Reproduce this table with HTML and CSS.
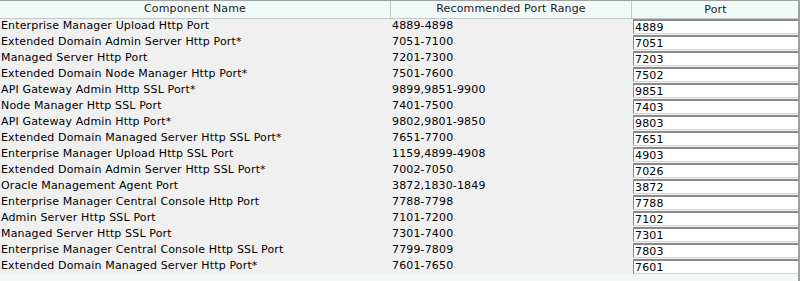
FILE: index.html
```html
<!DOCTYPE html>
<html>
<head>
<meta charset="utf-8">
<link rel="stylesheet" href="styles.css">
</head>
<body>
<div class="table">
  <div class="head">
    <div class="hc c1">Component Name</div>
    <div class="hc c2">Recommended Port Range</div>
    <div class="hc c3">Port</div>
  </div>
  <div class="rows">
    <div class="row"><div class="c1 cell">Enterprise Manager Upload Http Port</div><div class="c2 cell">4889-4898</div><div class="c3"><div class="inp">4889</div></div></div>
    <div class="row"><div class="c1 cell">Extended Domain Admin Server Http Port*</div><div class="c2 cell">7051-7100</div><div class="c3"><div class="inp">7051</div></div></div>
    <div class="row"><div class="c1 cell">Managed Server Http Port</div><div class="c2 cell">7201-7300</div><div class="c3"><div class="inp">7203</div></div></div>
    <div class="row"><div class="c1 cell">Extended Domain Node Manager Http Port*</div><div class="c2 cell">7501-7600</div><div class="c3"><div class="inp">7502</div></div></div>
    <div class="row"><div class="c1 cell">API Gateway Admin Http SSL Port*</div><div class="c2 cell">9899,9851-9900</div><div class="c3"><div class="inp">9851</div></div></div>
    <div class="row"><div class="c1 cell">Node Manager Http SSL Port</div><div class="c2 cell">7401-7500</div><div class="c3"><div class="inp">7403</div></div></div>
    <div class="row"><div class="c1 cell">API Gateway Admin Http Port*</div><div class="c2 cell">9802,9801-9850</div><div class="c3"><div class="inp">9803</div></div></div>
    <div class="row"><div class="c1 cell">Extended Domain Managed Server Http SSL Port*</div><div class="c2 cell">7651-7700</div><div class="c3"><div class="inp">7651</div></div></div>
    <div class="row"><div class="c1 cell">Enterprise Manager Upload Http SSL Port</div><div class="c2 cell">1159,4899-4908</div><div class="c3"><div class="inp">4903</div></div></div>
    <div class="row"><div class="c1 cell">Extended Domain Admin Server Http SSL Port*</div><div class="c2 cell">7002-7050</div><div class="c3"><div class="inp">7026</div></div></div>
    <div class="row"><div class="c1 cell">Oracle Management Agent Port</div><div class="c2 cell">3872,1830-1849</div><div class="c3"><div class="inp">3872</div></div></div>
    <div class="row"><div class="c1 cell">Enterprise Manager Central Console Http Port</div><div class="c2 cell">7788-7798</div><div class="c3"><div class="inp">7788</div></div></div>
    <div class="row"><div class="c1 cell">Admin Server Http SSL Port</div><div class="c2 cell">7101-7200</div><div class="c3"><div class="inp">7102</div></div></div>
    <div class="row"><div class="c1 cell">Managed Server Http SSL Port</div><div class="c2 cell">7301-7400</div><div class="c3"><div class="inp">7301</div></div></div>
    <div class="row"><div class="c1 cell">Enterprise Manager Central Console Http SSL Port</div><div class="c2 cell">7799-7809</div><div class="c3"><div class="inp">7803</div></div></div>
    <div class="row"><div class="c1 cell">Extended Domain Managed Server Http Port*</div><div class="c2 cell">7601-7650</div><div class="c3"><div class="inp">7601</div></div></div>
  </div>
</div>
</body>
</html>
```
FILE: styles.css
```css
html, body {
  margin: 0;
  padding: 0;
  background: #f4f7f7;
}
body {
  font-family: "DejaVu Sans", sans-serif;
  font-size: 11px;
  letter-spacing: 0.15px;
  color: #000;
  width: 800px;
  height: 281px;
  overflow: hidden;
}
.table {
  width: 800px;
  border-right: 2px solid #a0a0a0;
  box-sizing: border-box;
  height: 281px;
}
.head {
  display: grid;
  grid-template-columns: 391px 241px 1fr;
  height: 18px;
  background: #f0f8f8;
  border-top: 1px solid #a0a0a0;
  box-sizing: border-box;
}
.hc {
  text-align: center;
  line-height: 16px;
  border-right: 1px solid #c4c8c8;
  border-bottom: 1px solid #c4c8c8;
  color: #222;
}
.hc.c3 { border-right: none; }
.row {
  display: grid;
  grid-template-columns: 391px 241px 1fr;
  height: 16px;
  background: #f0f0f0;
}
.cell {
  line-height: 16px;
  white-space: nowrap;
  overflow: hidden;
}
.c1.cell { padding-left: 1px; }
.c2.cell { padding-left: 1px; }
.c3 {
  padding: 1px 0 0 1px;
}
.inp {
  height: 15px;
  box-sizing: border-box;
  background: #fff;
  border-top: 2px solid #8a8a8a;
  border-left: 1px solid #8a8a8a;
  border-bottom: 1px solid #d4d4d4;
  line-height: 13px;
  padding-left: 1px;
}
```
